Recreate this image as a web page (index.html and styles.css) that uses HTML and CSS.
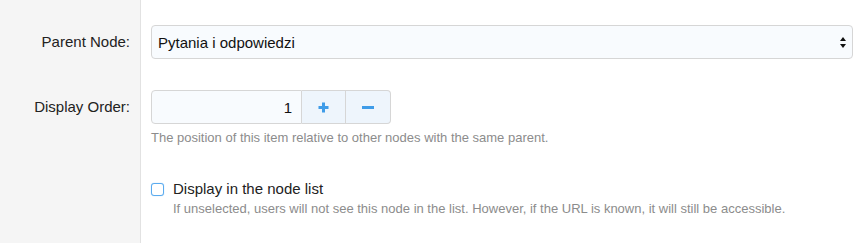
FILE: index.html
```html
<!DOCTYPE html>
<html>
<head>
<meta http-equiv="content-type" content="text/html;charset=UTF-8" />
<title>Node options</title>
<link rel="stylesheet" href="styles.css">
</head>
<body>
<form class="node-form">
  <div class="form-row row-parent">
    <div class="form-label"><label for="parent-node">Parent Node:</label></div>
    <div class="form-field">
      <div class="select-wrap">
        <select id="parent-node" class="input select">
          <option>Pytania i odpowiedzi</option>
        </select>
        <svg class="select-arrow" width="6" height="11" viewBox="0 0 6 11">
          <path d="M3 0 L6 4 L0 4 Z M0 7 L6 7 L3 11 Z" fill="#111"/>
        </svg>
      </div>
    </div>
  </div>

  <div class="form-row row-order">
    <div class="form-label"><label for="display-order">Display Order:</label></div>
    <div class="form-field">
      <div class="spinner">
        <input id="display-order" class="input spinner-input" type="text" value="1">
        <button type="button" class="spinner-btn" title="Increase">
          <svg width="11" height="11" viewBox="0 0 11 11"><path d="M5.5 0.5 V10.5 M0.5 5.5 H10.5" stroke="#3f9ce8" stroke-width="3"/></svg>
        </button>
        <button type="button" class="spinner-btn" title="Decrease">
          <svg width="12" height="11" viewBox="0 0 12 11"><path d="M0 5.5 H12" stroke="#3f9ce8" stroke-width="3"/></svg>
        </button>
      </div>
      <p class="hint">The position of this item relative to other nodes with the same parent.</p>
    </div>
  </div>

  <div class="form-row row-check">
    <div class="form-label"></div>
    <div class="form-field">
      <label class="check">
        <input type="checkbox" class="check-box">
        <span>Display in the node list</span>
      </label>
      <p class="hint hint-indent">If unselected, users will not see this node in the list. However, if the URL is known, it will still be accessible.</p>
    </div>
  </div>
</form>
</body>
</html>
```

FILE: styles.css
```css
* {
  font-family: "Liberation Sans", Arial, sans-serif;
  box-sizing: border-box;
}
html, body {
  margin: 0;
  height: 100%;
  background: #fff;
}
.node-form {
  display: flex;
  flex-direction: column;
  min-height: 100%;
}
.form-row {
  display: flex;
}
.row-check {
  flex: 1;
}
.form-label {
  flex: 0 0 141px;
  background: #f5f5f5;
  border-right: 1px solid #e2e2e2;
  padding-right: 10px;
  text-align: right;
  font-size: 15px;
  color: #222;
}
.form-field {
  flex: 1;
  padding-left: 10px;
  padding-right: 6px;
}
.row-parent .form-label,
.row-parent .form-field {
  padding-top: 25px;
}
.row-parent .form-label label {
  line-height: 34px;
}
.row-order .form-label,
.row-order .form-field {
  padding-top: 31px;
}
.row-order .form-label label {
  display: block;
  line-height: 34px;
}
.row-check .form-field {
  padding-top: 32px;
}

.input {
  height: 34px;
  border: 1px solid #d6d6d6;
  border-radius: 4px;
  background: #f8fbfe;
  font-size: 15px;
  color: #111;
  outline: none;
}
.select-wrap {
  position: relative;
}
.select {
  -webkit-appearance: none;
  appearance: none;
  display: block;
  width: 100%;
  padding: 0 24px 0 6px;
}
.select-arrow {
  position: absolute;
  right: 7px;
  top: 12px;
}

.spinner {
  display: flex;
  width: 240px;
  height: 34px;
}
.spinner-input {
  width: 151px;
  text-align: right;
  padding: 0 9px 0 6px;
  border-radius: 4px 0 0 4px;
}
.spinner-btn {
  width: 44px;
  height: 34px;
  border: 1px solid #d6d6d6;
  border-left: none;
  background: #eef5fc;
  padding: 0;
  display: flex;
  align-items: center;
  justify-content: center;
}
.spinner-btn:last-child {
  width: 45px;
  border-radius: 0 4px 4px 0;
}

.hint {
  margin: 5px 0 0;
  font-size: 13px;
  line-height: 18px;
  color: #8c8c8c;
}
.hint-indent {
  margin: 1px 0 0 22px;
}
.check {
  display: flex;
  align-items: center;
  line-height: 20px;
  font-size: 15px;
  color: #222;
}
.check-box {
  -webkit-appearance: none;
  appearance: none;
  width: 13px;
  height: 13px;
  margin: 0 9px 0 0;
  border: 1px solid #5aabef;
  border-radius: 3px;
  background: #fff;
  box-shadow: 0 0 1px #8cc4f3;
}
```
